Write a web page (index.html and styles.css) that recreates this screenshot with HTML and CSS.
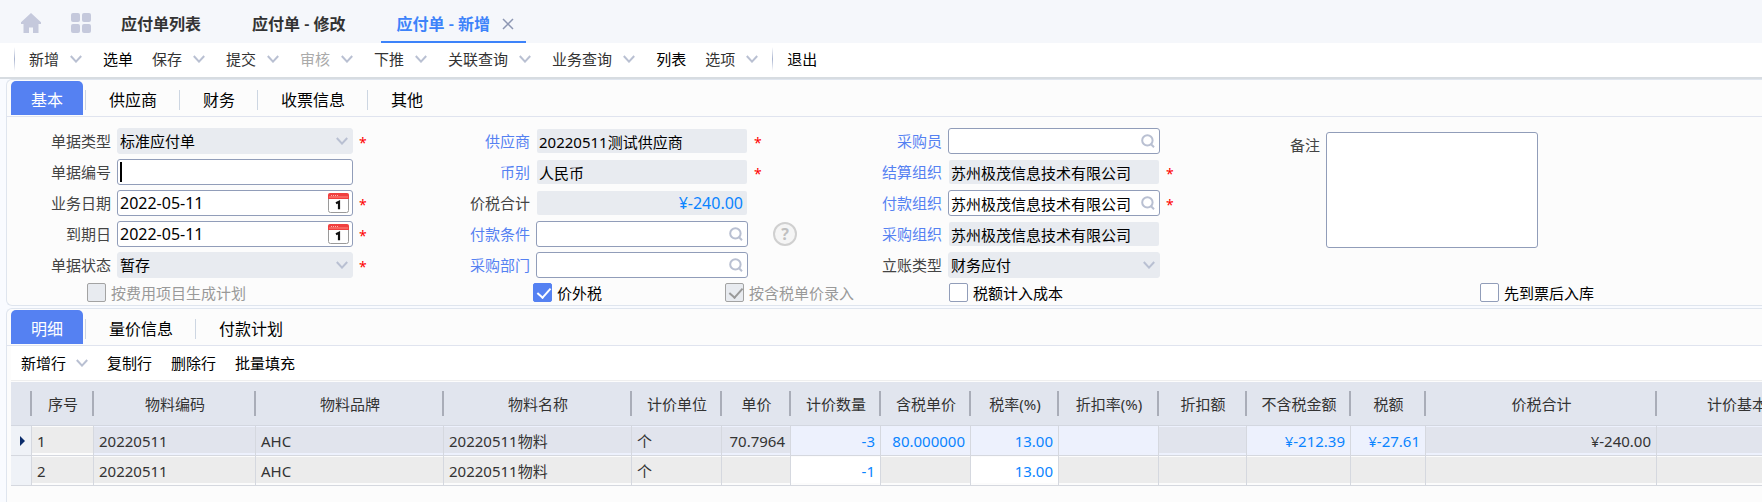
FILE: index.html
```html
<!DOCTYPE html>
<html lang="zh-CN">
<head>
    <meta charset="UTF-8">
    <meta name="viewport" content="width=device-width, initial-scale=1.0">
    <title>应付单 - 新增</title>
    <link rel="stylesheet" href="styles.css">
</head>
<body>
    <!-- icônes partagées -->
    <svg class="defs" width="0" height="0">
        <symbol id="chevron" viewBox="0 0 12 8"><path d="M0.8 1l5.2 5.6L11.2 1" fill="none" stroke="#b9c0d2" stroke-width="2"/></symbol>
        <symbol id="search" viewBox="0 0 14 14"><circle cx="6.4" cy="6.4" r="5.2" fill="none" stroke="#b9c0d2" stroke-width="2"/><path d="M9.8 10l3.2 3.2" stroke="#b9c0d2" stroke-width="2"/></symbol>
        <symbol id="calendar" viewBox="0 0 21 20"><rect x="0.5" y="1" width="20" height="18.5" rx="2" fill="#fff" stroke="#9a9a9a"/><path d="M0 6V2a2 2 0 0 1 2-2h17a2 2 0 0 1 2 2v4z" fill="#f04040"/><path d="M1 4h19" stroke="#ff8a80"/><path d="M3 2.500h7" stroke="#ffb3ad" stroke-dasharray="1 1"/><path d="M8 10.200l3-1.400v7.400" fill="none" stroke="#111" stroke-width="2.200"/></symbol>
    </svg>

    <header class="tabbar">
        <button class="icon-btn" aria-label="首页">
            <svg width="20" height="20" viewBox="0 0 20 20" fill="#c5c9dc"><path d="M10 0L0 9.200V11h2.500v9H8v-5.500h4V20h5.500v-9H20V9.200z"/></svg>
        </button>
        <button class="icon-btn" aria-label="应用">
            <svg width="20" height="20" viewBox="0 0 20 20" fill="#c5c9dc"><rect width="9" height="9" rx="2"/><rect x="11" width="9" height="9" rx="2"/><rect y="11" width="9" height="9" rx="2"/><rect x="11" y="11" width="9" height="9" rx="2"/></svg>
        </button>
        <nav class="page-tabs">
            <a class="page-tab" href="#">应付单列表</a>
            <a class="page-tab" href="#">应付单 - 修改</a>
            <a class="page-tab active" href="#">应付单 - 新增
                <svg width="12" height="12" viewBox="0 0 12 12"><path d="M1 1l10 10M11 1L1 11" stroke="#8d97b3" stroke-width="1.500"/></svg>
            </a>
        </nav>
    </header>

    <div class="toolbar">
        <span class="sep"></span>
        <button class="tool soft">新增<svg width="12" height="8"><use href="#chevron"/></svg></button>
        <button class="tool">选单</button>
        <button class="tool soft">保存<svg width="12" height="8"><use href="#chevron"/></svg></button>
        <button class="tool soft">提交<svg width="12" height="8"><use href="#chevron"/></svg></button>
        <button class="tool soft" disabled>审核<svg width="12" height="8"><use href="#chevron"/></svg></button>
        <button class="tool soft">下推<svg width="12" height="8"><use href="#chevron"/></svg></button>
        <button class="tool soft">关联查询<svg width="12" height="8"><use href="#chevron"/></svg></button>
        <button class="tool soft">业务查询<svg width="12" height="8"><use href="#chevron"/></svg></button>
        <button class="tool">列表</button>
        <button class="tool soft">选项<svg width="12" height="8"><use href="#chevron"/></svg></button>
        <span class="sep"></span>
        <button class="tool">退出</button>
    </div>

    <main>
        <section class="panel">
            <nav class="tabs">
                <button class="tab active">基本</button>
                <button class="tab">供应商</button>
                <button class="tab">财务</button>
                <button class="tab">收票信息</button>
                <button class="tab">其他</button>
            </nav>
            <form>
                <div class="form-grid">
                    <div class="col wide">
                        <div class="row">
                            <label for="billType">单据类型</label>
                            <div class="field off"><select id="billType" disabled><option>标准应付单</option></select><svg width="12" height="8"><use href="#chevron"/></svg></div>
                            <span class="req">*</span>
                        </div>
                        <div class="row">
                            <label for="billNo">单据编号</label>
                            <div class="field"><span class="caret"></span><input type="text" id="billNo"></div>
                        </div>
                        <div class="row">
                            <label for="bizDate">业务日期</label>
                            <div class="field date"><input type="text" id="bizDate" value="2022-05-11"><svg width="21" height="20"><use href="#calendar"/></svg></div>
                            <span class="req">*</span>
                        </div>
                        <div class="row">
                            <label for="dueDate">到期日</label>
                            <div class="field date"><input type="text" id="dueDate" value="2022-05-11"><svg width="21" height="20"><use href="#calendar"/></svg></div>
                            <span class="req">*</span>
                        </div>
                        <div class="row">
                            <label for="status">单据状态</label>
                            <div class="field off"><select id="status" disabled><option>暂存</option></select><svg width="12" height="8"><use href="#chevron"/></svg></div>
                            <span class="req">*</span>
                        </div>
                    </div>
                    <div class="col">
                        <div class="row">
                            <label class="link" for="supplier">供应商</label>
                            <div class="field readonly"><input type="text" id="supplier" value="20220511测试供应商" readonly></div>
                            <span class="req">*</span>
                        </div>
                        <div class="row">
                            <label class="link" for="currency">币别</label>
                            <div class="field readonly"><input type="text" id="currency" value="人民币" readonly></div>
                            <span class="req">*</span>
                        </div>
                        <div class="row">
                            <label for="total">价税合计</label>
                            <div class="field readonly amount"><input type="text" id="total" value="¥-240.00" readonly></div>
                        </div>
                        <div class="row">
                            <label class="link" for="payTerm">付款条件</label>
                            <div class="field"><input type="text" id="payTerm"><svg width="14" height="14"><use href="#search"/></svg></div>
                            <button type="button" class="help" aria-label="帮助">?</button>
                        </div>
                        <div class="row">
                            <label class="link" for="dept">采购部门</label>
                            <div class="field"><input type="text" id="dept"><svg width="14" height="14"><use href="#search"/></svg></div>
                        </div>
                    </div>
                    <div class="col">
                        <div class="row">
                            <label class="link" for="buyer">采购员</label>
                            <div class="field"><input type="text" id="buyer"><svg width="14" height="14"><use href="#search"/></svg></div>
                        </div>
                        <div class="row">
                            <label class="link" for="settleOrg">结算组织</label>
                            <div class="field readonly"><input type="text" id="settleOrg" value="苏州极茂信息技术有限公司" readonly></div>
                            <span class="req">*</span>
                        </div>
                        <div class="row">
                            <label class="link" for="payOrg">付款组织</label>
                            <div class="field"><input type="text" id="payOrg" value="苏州极茂信息技术有限公司"><svg width="14" height="14"><use href="#search"/></svg></div>
                            <span class="req">*</span>
                        </div>
                        <div class="row">
                            <label class="link" for="purOrg">采购组织</label>
                            <div class="field readonly"><input type="text" id="purOrg" value="苏州极茂信息技术有限公司" readonly></div>
                        </div>
                        <div class="row">
                            <label for="accType">立账类型</label>
                            <div class="field off"><select id="accType" disabled><option>财务应付</option></select><svg width="12" height="8"><use href="#chevron"/></svg></div>
                        </div>
                    </div>
                    <div class="col remark">
                        <div class="row">
                            <label for="remark">备注</label>
                            <textarea id="remark"></textarea>
                        </div>
                    </div>
                </div>
                <div class="checks">
                    <div class="check-cell plan">
                        <label class="check"><input type="checkbox" disabled>按费用项目生成计划</label>
                    </div>
                    <div class="check-cell tax">
                        <label class="check"><input type="checkbox" checked>价外税</label>
                        <label class="check"><input type="checkbox" checked disabled>按含税单价录入</label>
                    </div>
                    <div class="check-cell cost">
                        <label class="check"><input type="checkbox">税额计入成本</label>
                    </div>
                    <div class="check-cell stock">
                        <label class="check"><input type="checkbox">先到票后入库</label>
                    </div>
                </div>
            </form>
        </section>

        <section class="panel detail">
            <nav class="tabs">
                <button class="tab active">明细</button>
                <button class="tab">量价信息</button>
                <button class="tab">付款计划</button>
            </nav>
            <div class="row-tools">
                <button class="tool">新增行<svg width="12" height="8"><use href="#chevron"/></svg></button>
                <button class="tool">复制行</button>
                <button class="tool">删除行</button>
                <button class="tool">批量填充</button>
            </div>
            <div class="grid-wrap">
                <table class="grid">
                    <thead>
                        <tr>
                            <th></th><th>序号</th><th>物料编码</th><th>物料品牌</th><th>物料名称</th><th>计价单位</th><th>单价</th><th>计价数量</th><th>含税单价</th><th>税率(%)</th><th>折扣率(%)</th><th>折扣额</th><th>不含税金额</th><th>税额</th><th>价税合计</th><th>计价基本数量</th>
                        </tr>
                    </thead>
                    <tbody>
                        <tr class="current">
                            <td class="mark"><svg width="5" height="10" viewBox="0 0 5 10"><path d="M0 0l5 5-5 5z" fill="#0b2c6b"/></svg></td>
                            <td class="no">1</td>
                            <td>20220511</td>
                            <td>AHC</td>
                            <td>20220511物料</td>
                            <td>个</td>
                            <td class="num">70.7964</td>
                            <td class="num edit">-3</td>
                            <td class="num edit">80.000000</td>
                            <td class="num edit">13.00</td>
                            <td class="num edit"></td>
                            <td></td>
                            <td class="num edit">¥-212.39</td>
                            <td class="num edit">¥-27.61</td>
                            <td class="num">¥-240.00</td>
                            <td></td>
                        </tr>
                        <tr>
                            <td class="mark"></td>
                            <td class="no">2</td>
                            <td>20220511</td>
                            <td>AHC</td>
                            <td>20220511物料</td>
                            <td>个</td>
                            <td></td>
                            <td class="num edit">-1</td>
                            <td></td>
                            <td class="num edit">13.00</td>
                            <td></td>
                            <td></td>
                            <td></td>
                            <td></td>
                            <td></td>
                            <td></td>
                        </tr>
                    </tbody>
                </table>
            </div>
        </section>
    </main>
</body>
</html>
```
FILE: styles.css
```css
* {
    box-sizing: border-box;
}
body {
    display: flex;
    flex-direction: column;
    min-height: 100vh;
    margin: 0;
    overflow-x: hidden;
    background: #fcfcfc;
    color: #000;
    font-family: "Noto Sans", "Noto Sans CJK SC", sans-serif;
    font-size: 15px;
    line-height: 20px;
}
button, input, select, textarea {
    margin: 0;
    padding: 0;
    border: 0;
    background: none;
    color: inherit;
    font: inherit;
}
button {
    cursor: pointer;
}
svg {
    display: block;
    flex: none;
}
.defs {
    position: absolute;
}

/* barre d'onglets */
.tabbar {
    display: flex;
    align-items: stretch;
    gap: 30px;
    height: 43px;
    padding-left: 21px;
    background: #f5f7fb;
}
.icon-btn {
    padding-top: 3px;
}
.page-tabs {
    display: flex;
    gap: 21px;
    margin-left: -15px;
}
.page-tab {
    display: flex;
    align-items: center;
    gap: 12px;
    padding: 8px 15px 2px;
    border-bottom: 2px solid transparent;
    color: #333;
    font-size: 16px;
    font-weight: 600;
    text-decoration: none;
    white-space: nowrap;
}
.page-tab.active {
    padding-right: 12px;
    border-color: #3d83fa;
    color: #3d83fa;
}

/* barre d'outils */
.toolbar {
    display: flex;
    align-items: center;
    gap: 19px;
    height: 36px;
    padding: 0 0 2px 14px;
    background: #fff;
    border-bottom: 2px solid #d7dce1;
}
.sep {
    width: 1px;
    height: 24px;
    margin-right: -5px;
    background: linear-gradient(#fff, #a9b4cf, #fff);
}
.tool + .sep {
    margin-left: -7px;
}
.tool {
    display: flex;
    align-items: center;
    gap: 11px;
    white-space: nowrap;
}
.tool.soft {
    margin-right: 2px;
    color: #333;
}
.tool:disabled {
    color: #aaa;
}

/* panneaux */
main {
    display: flex;
    flex: 1;
    flex-direction: column;
    gap: 2px;
    padding-left: 6px;
    background: #f9fbff;
}
.panel {
    border: 1px solid #dfe5ee;
    border-right: 0;
    border-radius: 6px 0 0 6px;
    background: #fcfcfc;
}
.tabs {
    display: flex;
    align-items: center;
    padding: 1px 4px;
    border-bottom: 1px solid #e0e4ef;
}
.tab {
    display: flex;
    align-items: center;
    height: 34px;
    padding-top: 3px;
    font-size: 16px;
    white-space: nowrap;
}
.tab::after {
    width: 1px;
    height: 20px;
    margin: 0 23px 0 22px;
    background: #cdd6e2;
    content: "";
}
.tab:last-child::after {
    display: none;
}
.tab.active {
    margin-right: 26px;
    padding: 3px 20px 0;
    border-radius: 5px 5px 0 0;
    background: #5581f2;
    color: #fff;
}
.tab.active::after {
    margin: 0 -23px 0 22px;
}

/* formulaire */
.form-grid, .checks {
    display: grid;
    grid-template-columns: 419fr 412fr 378fr 546fr;
}
.form-grid {
    padding-top: 11px;
}
.col {
    display: flex;
    flex-direction: column;
    gap: 5px;
}
.row {
    display: flex;
    align-items: center;
}
.row label {
    flex: none;
    width: 104px;
    margin-right: 6px;
    color: #444;
    text-align: right;
}
.row label.link {
    color: #5581f2;
}
.field {
    display: flex;
    align-items: center;
    width: 212px;
    height: 26px;
    padding: 0 4px 0 2px;
    border: 1px solid #919db9;
    border-radius: 3px;
    background: #fff;
}
.wide .field {
    width: 236px;
}
.field input, .field select {
    flex: 1;
    min-width: 0;
    height: 24px;
    outline: 0;
    appearance: none;
    opacity: 1;
}
.field.off {
    border-color: #e8ebf0;
    background: #e8ebf0;
}
.field.date {
    padding-right: 3px;
    font-size: 16px;
}
.field.readonly {
    border-color: transparent;
    background: #e8ebf0 padding-box;
}
.field.amount {
    font-size: 16px;
}
.field.amount input {
    color: #0a84ff;
    text-align: right;
}
.caret {
    width: 2px;
    height: 20px;
    background: #000;
}
.req {
    margin-left: 6px;
    padding-top: 3px;
    color: #f00;
    font-size: 14px;
}
.help {
    width: 24px;
    height: 24px;
    margin-left: 25px;
    border: 2px solid #d0d0d0;
    border-radius: 50%;
    background: #f5f5f5;
    color: #c0c0c0;
    font-size: 16px;
    font-weight: 700;
}
.remark .row {
    align-items: flex-start;
    padding-top: 4px;
}
.remark label {
    padding-top: 3px;
}
textarea {
    width: 212px;
    height: 116px;
    border: 1px solid #919db9;
    border-radius: 3px;
    background: #fff;
    resize: none;
}
.checks {
    padding: 5px 0 3px;
}
.check-cell {
    display: flex;
    gap: 123px;
    min-width: 0;
}
.check-cell.plan {
    padding-left: 80px;
}
.check-cell.tax {
    padding-left: 107px;
}
.check-cell.cost {
    padding-left: 111px;
}
.check-cell.stock {
    padding-left: 264px;
}
.check {
    display: flex;
    align-items: center;
    gap: 5px;
    height: 19px;
    white-space: nowrap;
}
.check input {
    flex: none;
    width: 19px;
    height: 19px;
    border: 1px solid #919db9;
    border-radius: 2px;
    background: #fff;
    appearance: none;
}
.check input:checked {
    border-color: #5581f2;
    background: #5581f2;
}
.check input:checked::after {
    display: block;
    width: 6px;
    height: 11px;
    margin: 1px 0 0 6px;
    border: solid #fff;
    border-width: 0 2px 2px 0;
    transform: rotate(42deg);
    content: "";
}
.check input:disabled {
    border-color: #a3a3a3;
    background: #e8ebf0;
}
.check input:disabled::after {
    border-color: #999;
}
.check:has(input:disabled) {
    color: #999;
}

/* lignes de détail */
.detail {
    flex: 1;
    border-bottom: 0;
    border-bottom-left-radius: 0;
}
.row-tools {
    display: flex;
    align-items: center;
    gap: 19px;
    height: 35px;
    margin: 0 0 1px 4px;
    padding: 0 0 1px 10px;
    border-bottom: 1px solid #eee;
    background: #fff;
}
.row-tools .tool {
    gap: 10px;
}
.grid-wrap {
    margin-left: 4px;
    overflow: hidden;
}
.grid {
    width: 1836px;
    border-spacing: 0;
    table-layout: fixed;
    color: #333;
}
.grid th {
    height: 44px;
    padding: 0;
    border-bottom: 1px solid #d3d7e0;
    background: linear-gradient(#a9adb8, #a9adb8) right 9px / 2px 25px no-repeat #e1e5ee;
    font-weight: 400;
}
.grid td {
    height: 30px;
    padding: 0 5px;
    border-right: 1px solid #d5d8df;
    border-bottom: 1px solid #d5d8df;
    background: #ececec;
    box-shadow: inset 0 1px #fcfcfc, inset 0 -2px #fcfcfc;
    white-space: nowrap;
}
.grid .current td {
    background: #e1e4ed;
    box-shadow: inset 0 1px #edf1fd, inset 0 -2px #edf1fd;
}
.grid .current .no {
    background: #ececec;
    box-shadow: inset 0 1px #fcfcfc, inset 0 -2px #fcfcfc;
}
.grid .mark, .grid .current .mark {
    padding: 0 0 0 9px;
    background: #eff2f7;
    box-shadow: none;
}
.grid .num {
    text-align: right;
}
.grid .edit {
    background: #fff;
    color: #0a84ff;
}
.grid .current .edit {
    background: #edf1fd;
}
.grid th:nth-child(1) { width: 21px; }
.grid th:nth-child(2) { width: 62px; }
.grid th:nth-child(3) { width: 162px; }
.grid th:nth-child(4), .grid th:nth-child(5) { width: 188px; }
.grid th:nth-child(6), .grid th:nth-child(8), .grid th:nth-child(9) { width: 90px; }
.grid th:nth-child(7) { width: 69px; }
.grid th:nth-child(10), .grid th:nth-child(12) { width: 88px; }
.grid th:nth-child(11) { width: 100px; }
.grid th:nth-child(13) { width: 104px; }
.grid th:nth-child(14) { width: 75px; }
.grid th:nth-child(15) { width: 231px; }
.grid th:nth-child(16) { width: 190px; }
```
